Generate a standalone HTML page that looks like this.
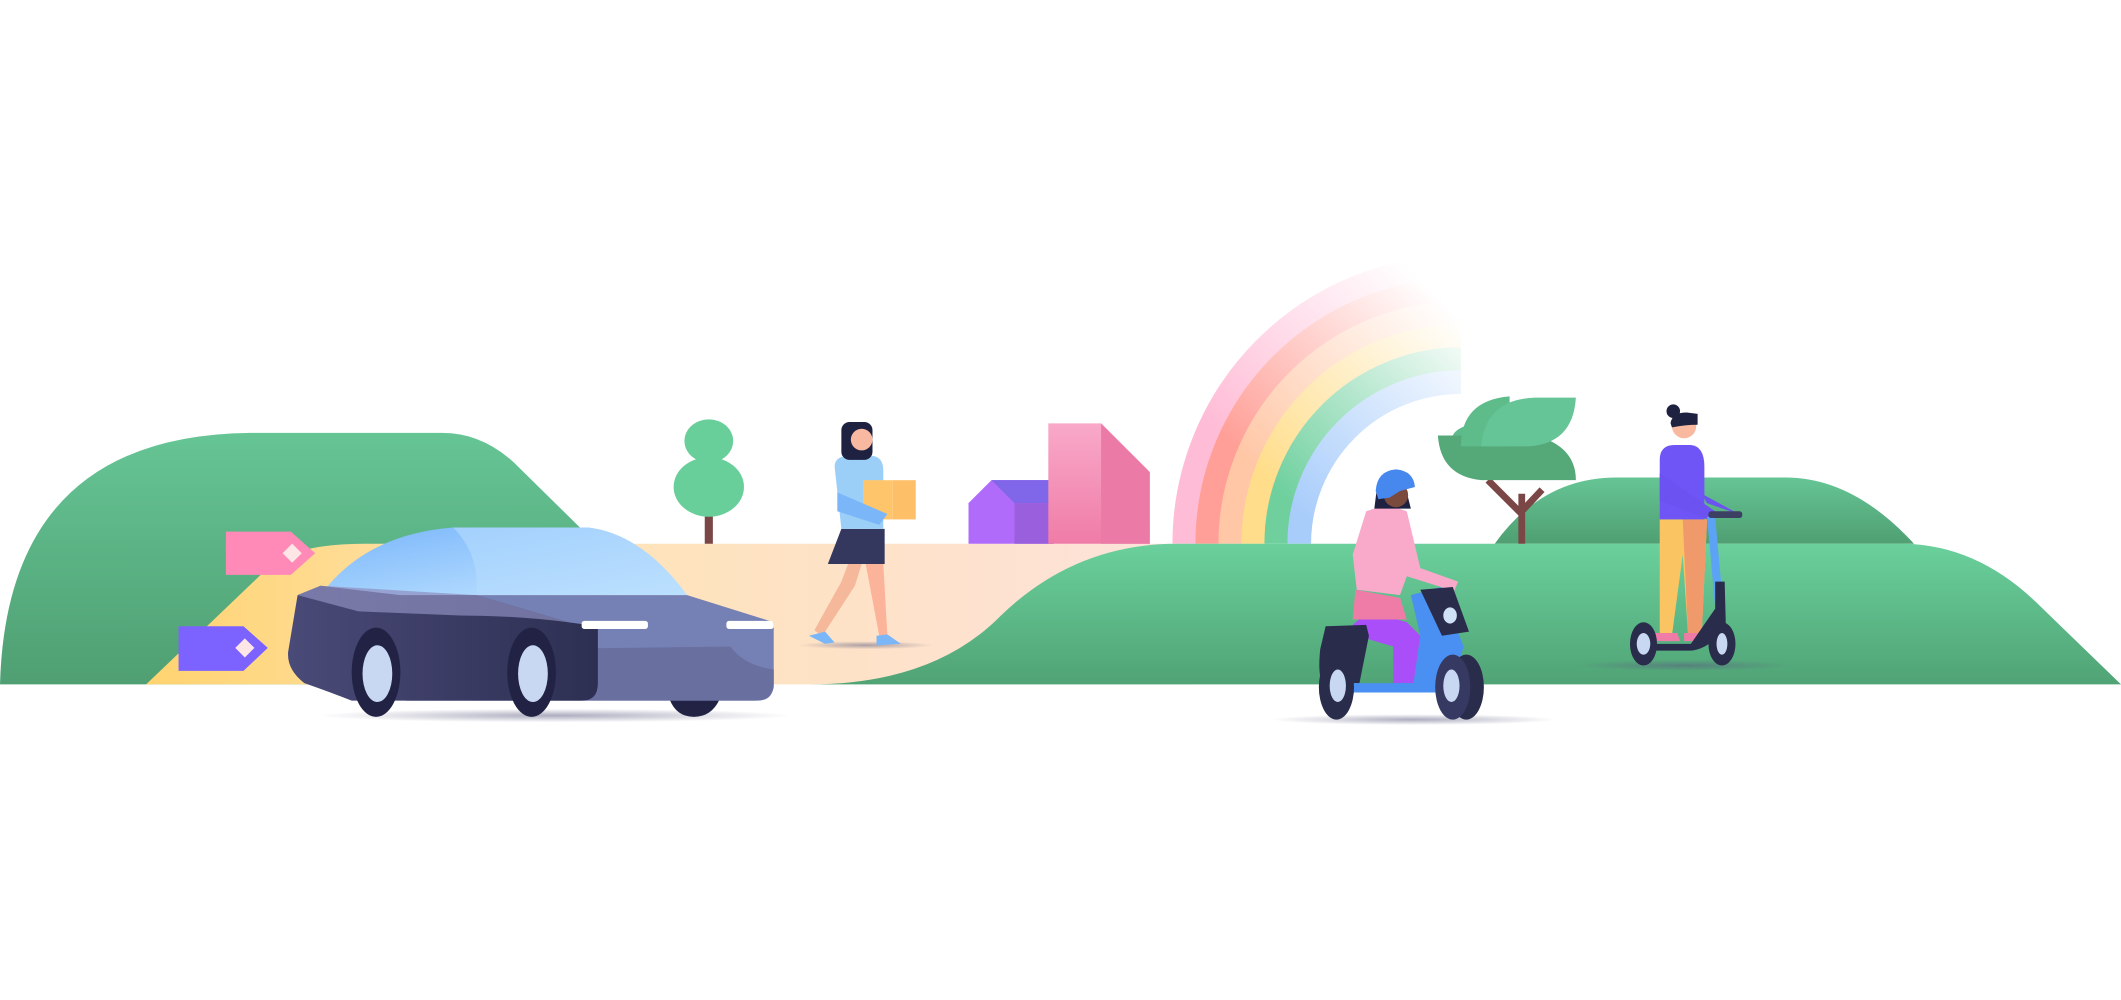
<!DOCTYPE html>
<html><head><meta charset="utf-8"><style>html,body{margin:0;padding:0;background:#fff;width:2121px;height:1000px;overflow:hidden}svg{display:block}</style></head>
<body>
<svg width="2121" height="1000" viewBox="0 0 1568 739.3" preserveAspectRatio="none" xmlns="http://www.w3.org/2000/svg">
<defs>
<linearGradient id="g1" x1="0" y1="0" x2="0" y2="1"><stop offset="0" stop-color="#66c595"/><stop offset="1" stop-color="#4f9f72"/></linearGradient>
<linearGradient id="g2" x1="0" y1="0" x2="0" y2="1"><stop offset="0" stop-color="#6ad09c"/><stop offset="1" stop-color="#50a375"/></linearGradient>
<linearGradient id="road" x1="0" y1="0" x2="1" y2="0"><stop offset="0" stop-color="#ffd36f"/><stop offset=".35" stop-color="#ffe3b3"/><stop offset="1" stop-color="#fde2dc"/></linearGradient>
<linearGradient id="mg" gradientUnits="userSpaceOnUse" x1="880" y1="402" x2="1085" y2="190"><stop offset="0.25" stop-color="#fff"/><stop offset="0.88" stop-color="#000"/></linearGradient>
<mask id="rm"><rect x="860" y="170" width="240" height="240" fill="url(#mg)"/></mask>
<linearGradient id="carb" x1="0" y1="0" x2="1" y2="0"><stop offset="0" stop-color="#4a4a78"/><stop offset="1" stop-color="#2d2f52"/></linearGradient>
<linearGradient id="glass" x1="0" y1="0" x2="1" y2="1"><stop offset="0" stop-color="#79b6fb"/><stop offset="1" stop-color="#c5e6ff"/></linearGradient>
<linearGradient id="pink" x1="0" y1="0" x2="0" y2="1"><stop offset="0" stop-color="#f9a9c9"/><stop offset="1" stop-color="#ef7ca7"/></linearGradient>
<radialGradient id="sh"><stop offset="0" stop-color="#5a5a80" stop-opacity=".5"/><stop offset="1" stop-color="#5a5a80" stop-opacity="0"/></radialGradient>
</defs>
<g fill="none" stroke-width="17.5" mask="url(#rm)">
<path d="M875.5,402 A204.5,204.5 0 0 1 1080,197.5" stroke="#ffbcd6"/>
<path d="M892.5,402 A187.5,187.5 0 0 1 1080,214.5" stroke="#ff9f97"/>
<path d="M909.5,402 A170.5,170.5 0 0 1 1080,231.5" stroke="#ffc7a6"/>
<path d="M926.5,402 A153.5,153.5 0 0 1 1080,248.5" stroke="#ffdd8a"/>
<path d="M943.5,402 A136.5,136.5 0 0 1 1080,265.5" stroke="#6fd09e"/>
<path d="M960.5,402 A119.5,119.5 0 0 1 1080,282.5" stroke="#a9cdfb"/>
</g>
<path d="M1105,402 Q1140,353 1195,353 L1320,353 Q1370,353 1415,402 Z" fill="url(#g1)"/>
<path d="M0,506 Q5,322 185,320 L327,320 Q356,320 380,342 L445,406 L445,506 Z" fill="url(#g1)"/>
<path d="M108,506 L200,418 Q220,402 270,402 L880,402 L880,506 Z" fill="url(#road)"/>
<path d="M598,506 Q690,506 740,455 Q795,402 870,402 L1405,402 Q1460,402 1505,445 L1568,506 Z" fill="url(#g2)"/>
<path d="M167,393 L215,393 L233,409 L215,425 L167,425 Z" fill="#ff8ab8"/>
<rect x="211" y="404" width="10" height="10" fill="#ffe6e6" transform="rotate(45 216 409)"/>
<path d="M132,463 L180,463 L198,479 L180,496 L132,496 Z" fill="#7c63ff"/>
<rect x="176" y="474" width="10" height="10" fill="#ffe6e6" transform="rotate(45 181 479)"/>
<rect x="521" y="378" width="6" height="24" fill="#7a4646"/>
<ellipse cx="524" cy="326" rx="18" ry="16" fill="#69cf9a"/>
<ellipse cx="524" cy="360" rx="26" ry="22" fill="#69cf9a"/>
<path d="M716,372 L733,355 L779,355 L779,402 L716,402 Z" fill="#b06bfa"/>
<path d="M733,355 L779,355 L779,372 L750,372 Z" fill="#8066e8"/>
<rect x="750" y="372" width="29" height="30" fill="#9a5fdc"/>
<path d="M775,313 L814,313 L850,349 L850,402 L775,402 Z" fill="url(#pink)"/>
<path d="M814,313 L850,349 L850,402 L814,402 Z" fill="#ec7aa6"/>
<path d="M1125,365 L1125,402 M1125,380 L1100,355 M1125,378 L1140,362" stroke="#7a4646" stroke-width="5" fill="none"/>
<path d="M1063,322 L1135,322 Q1165,330 1165,355 L1095,355 Q1065,352 1063,322 Z" fill="#55a878"/>
<path d="M1074,322 Q1078,312 1116,309 L1116,322 Z" fill="#5dbb8b"/>
<path d="M1080,330 Q1080,296 1116,293 L1116,330 Z" fill="#5ebc8a"/>
<path d="M1095,330 Q1098,295 1135,294 L1165,294 Q1163,328 1130,330 Z" fill="#66c596"/>
<ellipse cx="410" cy="529" rx="175" ry="5" fill="url(#sh)"/>
<ellipse cx="1045" cy="532" rx="105" ry="4" fill="url(#sh)"/>
<ellipse cx="1245" cy="492" rx="80" ry="4" fill="url(#sh)"/>
<ellipse cx="640" cy="477" rx="50" ry="3" fill="url(#sh)"/>
<g>
<path d="M495,517 Q500,530 513,530 Q526,530 532,517 Z" fill="#222344"/>
<path d="M237,440 Q270,395 335,390 L435,390 Q475,395 508,440 Z" fill="url(#glass)"/>
<path d="M335,390 Q355,410 352,440 L508,440 Q475,395 435,390 Z" fill="#b5dcfd" opacity=".6"/>
<path d="M296,440 L508,440 L572,460 L572,505 Q572,518 560,518 L300,518 Z" fill="#7580b5"/>
<path d="M300,495 Q340,490 350,492 Q360,482 380,480 L540,478 Q550,492 572,495 L572,508 Q570,518 558,518 L300,518 Z" fill="#6970a0"/>
<path d="M220,440 L237,433 L296,440 L352,440 L420,460 L442,463 L442,505 Q442,518 430,518 L260,518 Q245,512 225,505 Q212,495 213,482 Z" fill="url(#carb)"/>
<path d="M220,440 L237,433 L352,440 L420,460 Q380,455 340,455 L265,452 Z" fill="#8f8fbf" opacity=".7"/>
<rect x="430" y="459" width="49" height="6" rx="2" fill="#fff"/>
<rect x="537" y="459" width="35" height="6" rx="2" fill="#fff"/>
<ellipse cx="278" cy="497" rx="18" ry="33" fill="#222344"/>
<ellipse cx="279" cy="498" rx="11" ry="21" fill="#c8d8f3"/>
<ellipse cx="393" cy="497" rx="18" ry="33" fill="#222344"/>
<ellipse cx="394" cy="498" rx="11" ry="21" fill="#c8d8f3"/>
</g>
<g>
<path d="M627,417 L622,430 L602,466 L608,470 L632,433 L637,417 Z" fill="#f5b89a"/>
<path d="M640,417 L650,470 L656,470 L653,417 Z" fill="#fbb39a"/>
<path d="M598,470 L610,467 L617,475 L610,476 Z M648,470 L656,469 L666,476 L648,477 Z" fill="#7ab6f8"/>
<path d="M622,391 L654,391 L654,417 L612,417 Z" fill="#34375e"/>
<path d="M617,345 Q617,337 628,337 L645,337 Q653,338 653,348 L653,391 L622,391 Z" fill="#9ccff8"/>
<rect x="622" y="312" width="23" height="28" rx="6" fill="#1f2140"/>
<circle cx="637" cy="325" r="8" fill="#f9b8a0"/>
<rect x="638" y="355" width="22" height="29" fill="#ffc56a"/>
<rect x="660" y="355" width="17" height="29" fill="#fdbf68"/>
<path d="M619,364 L619,378 L650,388 L656,380 Z" fill="#7ab6f8"/>
</g>
<g>
<path d="M1000,462 L1012,452 L1040,460 L1050,470 L1045,505 L1030,505 L1030,478 L1003,470 Z" fill="#a94ef8"/>
<path d="M1010,378 L1025,373 L1040,378 L1050,420 L1078,430 L1075,437 L1040,426 L1035,440 L1003,436 L1000,410 Z" fill="#f9a9c9"/>
<path d="M1002,436 L1035,442 L1040,458 L1000,458 Z" fill="#ef7ca7"/>
<path d="M1018,360 L1038,356 L1043,376 L1016,376 Z" fill="#1f2140"/>
<circle cx="1032" cy="366" r="9" fill="#7a4a3c"/>
<path d="M1017,363 Q1018,348 1032,347 Q1045,348 1046,360 L1035,363 L1027,368 L1019,369 Z" fill="#4788ee"/>
<path d="M980,463 L1010,462 L1012,470 L1005,505 L978,505 Q974,500 976,480 Z" fill="#2a2c4b"/>
<path d="M1043,440 L1065,434 L1082,478 L1072,512 L1000,512 L995,505 L1045,505 L1050,470 Z" fill="#4a90f2"/>
<path d="M1050,436 L1074,434 L1086,467 L1066,470 Z" fill="#2a2c4b"/>
<ellipse cx="1072" cy="455" rx="5" ry="6" fill="#cfe1f7"/>
<ellipse cx="988" cy="508" rx="13" ry="24" fill="#2a2c4b"/>
<ellipse cx="989" cy="507" rx="6" ry="12" fill="#c8d8f3"/>
<ellipse cx="1084" cy="508" rx="13" ry="24" fill="#2a2c4b"/>
<ellipse cx="1074" cy="508" rx="13" ry="24" fill="#363a62"/>
<ellipse cx="1073" cy="507" rx="6" ry="12" fill="#c8d8f3"/>
</g>
<g>
<path d="M1227,384 L1262,384 L1258,470 L1248,470 L1244,410 L1236,470 L1227,470 Z" fill="#fbc463"/>
<path d="M1244,384 L1262,384 L1258,470 L1248,470 Z" fill="#f0996a"/>
<path d="M1223,468 L1240,468 L1242,474 L1222,474 Z M1245,468 L1258,468 L1258,474 L1245,474 Z" fill="#ef7ca7"/>
<path d="M1227,340 Q1227,329 1238,329 L1250,329 Q1260,330 1260,345 L1260,384 L1227,384 Z" fill="#6f55f5"/>
<path d="M1227,350 L1227,370 L1265,385 L1268,378 Z M1258,365 L1280,377 L1285,380 L1262,372 Z" fill="#6c52f0"/>
<circle cx="1245" cy="315" r="9" fill="#f9b8a0"/>
<path d="M1235,313 Q1236,305 1247,305 L1255,306 L1255,314 Q1246,314 1236,316 Z" fill="#1f2140"/>
<circle cx="1237" cy="304" r="5" fill="#1f2140"/>
<path d="M1262,382 L1268,382 L1275,460 L1269,461 Z" fill="#5da3f5"/>
<rect x="1263" y="378" width="25" height="5" rx="2" fill="#3c4062"/>
<path d="M1268,430 L1275,430 L1276,468 L1268,472 Q1260,480 1250,481 L1214,481 L1214,476 L1250,476 L1268,450 Z" fill="#2a2c4b"/>
<ellipse cx="1215" cy="476" rx="10" ry="16" fill="#2a2c4b"/>
<ellipse cx="1215" cy="476" rx="5" ry="8" fill="#c8d8f3"/>
<ellipse cx="1273" cy="476" rx="10" ry="16" fill="#2a2c4b"/>
<ellipse cx="1273" cy="476" rx="4" ry="8" fill="#c8d8f3"/>
</g>
</svg>
</body></html>
